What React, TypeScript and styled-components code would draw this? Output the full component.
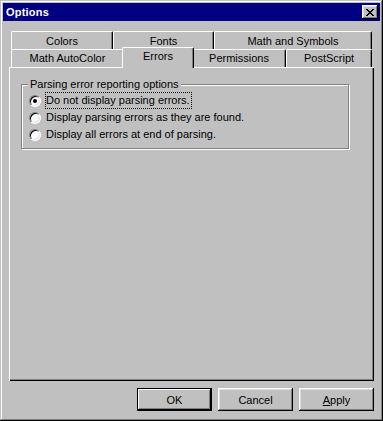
import React from "react";
import styled, { createGlobalStyle } from "styled-components";

const GlobalStyle = createGlobalStyle`
  html, body { margin: 0; padding: 0; background: #c0c0c0; }
  body { font-family: "Liberation Sans", Arial, sans-serif; font-size: 11px; color: #000; }
  * { box-sizing: border-box; }
`;

const Window = styled.div`
  width: 383px;
  height: 421px;
  background: #c0c0c0;
  padding: 3px;
  display: flex;
  flex-direction: column;
  box-shadow: inset -1px -1px #000, inset 1px 1px #c0c0c0, inset -2px -2px #808080,
    inset 2px 2px #fff;
`;

const TitleBar = styled.div`
  height: 18px;
  background: #000080;
  display: flex;
  align-items: center;
  justify-content: space-between;
  padding: 0 2px 0 3px;
`;

const Title = styled.span`
  color: #fff;
  font-weight: bold;
  font-size: 11px;
  letter-spacing: 0.2px;
`;

const CloseButton = styled.div`
  width: 16px;
  height: 14px;
  background: #c0c0c0;
  display: flex;
  align-items: center;
  justify-content: center;
  box-shadow: inset -1px -1px #000, inset 1px 1px #fff, inset -2px -2px #808080,
    inset 2px 2px #dfdfdf;
`;

const Body = styled.div`
  display: flex;
  flex-direction: column;
  padding: 10px 6px 0;
`;

const TabRow = styled.div`
  display: flex;
  align-items: flex-start;
  height: 18px;
  padding: 0 2px;
`;

const Tab = styled.div<{ $w: number; $selected?: boolean; $back?: boolean }>`
  position: relative;
  width: ${(p) => (p.$selected ? p.$w + 4 : p.$w)}px;
  height: ${(p) => (p.$selected ? 21 : 18)}px;
  margin: ${(p) => (p.$selected ? "-2px -2px 0" : "0")};
  z-index: ${(p) => (p.$selected ? 2 : 0)};
  flex: none;
  background: #c0c0c0;
  border-left: 1px solid #fff;
  border-top: 1px solid #fff;
  border-right: 1px solid #000;
  border-radius: 2px 2px 0 0;
  box-shadow: inset -1px 0 #808080;
  display: flex;
  justify-content: center;
  align-items: flex-start;
  padding-top: ${(p) => (p.$selected ? 2 : p.$back ? 3 : 2)}px;
  line-height: 13px;
  white-space: nowrap;
`;

const Panel = styled.div`
  position: relative;
  z-index: 1;
  height: 314px;
  background: #c0c0c0;
  padding: 11px 0 0 12px;
  box-shadow: inset 1px 1px #fff, inset -1px -1px #000, inset -2px -2px #808080;
`;

const Group = styled.fieldset`
  margin: 0;
  width: 328px;
  height: 71px;
  border: 1px solid #808080;
  padding: 1px 0 0 7px;
  box-shadow: inset 1px 1px #fff, 1px 1px #fff;
  display: flex;
  flex-direction: column;
`;

const Legend = styled.legend`
  padding: 0 2px;
  margin-left: -1px;
  line-height: 13px;
  background: #c0c0c0;
`;

const RadioRow = styled.div`
  display: flex;
  align-items: center;
  height: 17px;
  gap: 4px;
`;

const RadioCircle = styled.span<{ $checked?: boolean }>`
  width: 12px;
  height: 12px;
  border-radius: 50%;
  background: #fff;
  border: 1px solid;
  border-color: #808080 #fff #fff #808080;
  box-shadow: inset 1px 1px #000, inset -1px -1px #dfdfdf;
  display: flex;
  align-items: center;
  justify-content: center;
  flex: none;
  &::after {
    content: "";
    width: 4px;
    height: 4px;
    border-radius: 50%;
    background: #000;
    display: ${(p) => (p.$checked ? "block" : "none")};
  }
`;

const RadioLabel = styled.span<{ $focused?: boolean }>`
  height: 17px;
  line-height: 15px;
  padding: 0 1px 0 0;
  border: 1px ${(p) => (p.$focused ? "dotted #000" : "solid transparent")};
  white-space: nowrap;
`;

const ButtonRow = styled.div`
  display: flex;
  justify-content: flex-end;
  gap: 6px;
  margin-top: 7px;
`;

const Button = styled.div<{ $default?: boolean }>`
  width: 75px;
  height: 23px;
  display: flex;
  align-items: center;
  justify-content: center;
  background: #c0c0c0;
  box-shadow: ${(p) =>
    p.$default
      ? "inset 0 0 0 1px #000, inset -2px -2px #000, inset 2px 2px #fff, inset -3px -3px #808080"
      : "inset -1px -1px #000, inset 1px 1px #fff, inset -2px -2px #808080, inset 2px 2px #dfdfdf"};
`;

const CloseGlyph = () => (
  <svg width="8" height="7" viewBox="0 0 8 7" shapeRendering="crispEdges">
    <path
      fill="#000"
      d="M0 0h2v1H0zM6 0h2v1H6zM1 1h2v1H1zM5 1h2v1H5zM2 2h4v1H2zM3 3h2v1H3zM2 4h4v1H2zM1 5h2v1H1zM5 5h2v1H5zM0 6h2v1H0zM6 6h2v1H6z"
    />
  </svg>
);

const backTabs = [
  { label: "Colors", w: 102 },
  { label: "Fonts", w: 101 },
  { label: "Math and Symbols", w: 158 },
];

const frontTabs = [
  { label: "Math AutoColor", w: 113 },
  { label: "Errors", w: 68, selected: true },
  { label: "Permissions", w: 94 },
  { label: "PostScript", w: 86 },
];

const options = [
  { label: "Do not display parsing errors.", checked: true },
  { label: "Display parsing errors as they are found." },
  { label: "Display all errors at end of parsing." },
];

export default function App() {
  return (
    <>
      <GlobalStyle />
      <Window>
        <TitleBar>
          <Title>Options</Title>
          <CloseButton>
            <CloseGlyph />
          </CloseButton>
        </TitleBar>
        <Body>
          <TabRow>
            {backTabs.map((t) => (
              <Tab key={t.label} $w={t.w} $back>
                {t.label}
              </Tab>
            ))}
          </TabRow>
          <TabRow>
            {frontTabs.map((t) => (
              <Tab key={t.label} $w={t.w} $selected={t.selected}>
                {t.label}
              </Tab>
            ))}
          </TabRow>
          <Panel>
            <Group>
              <Legend>Parsing error reporting options</Legend>
              {options.map((o) => (
                <RadioRow key={o.label}>
                  <RadioCircle $checked={o.checked} />
                  <RadioLabel $focused={o.checked}>{o.label}</RadioLabel>
                </RadioRow>
              ))}
            </Group>
          </Panel>
          <ButtonRow>
            <Button $default>OK</Button>
            <Button>Cancel</Button>
            <Button>
              <span>
                <u>A</u>pply
              </span>
            </Button>
          </ButtonRow>
        </Body>
      </Window>
    </>
  );
}
